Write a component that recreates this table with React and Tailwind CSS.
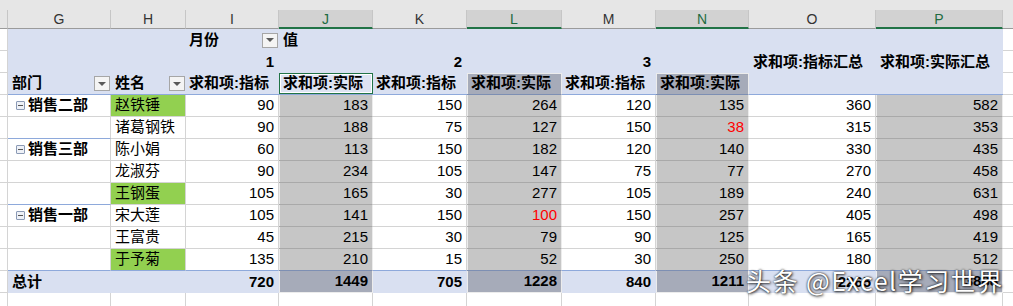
import React from 'react'

const FONT = { fontFamily: '"Liberation Sans", "Noto Sans CJK SC", sans-serif' }

const letters = ['G', 'H', 'I', 'J', 'K', 'L', 'M', 'N', 'O', 'P']
const picked = ['J', 'L', 'N', 'P']

const rows = [
  { dept: '销售二部', name: '赵铁锤', green: true, v: [90, 183, 150, 264, 120, 135, 360, 582] },
  { name: '诸葛钢铁', v: [90, 188, 75, 127, 150, 38, 315, 353], red: 5 },
  { dept: '销售三部', name: '陈小娟', v: [60, 113, 150, 182, 120, 140, 330, 435] },
  { name: '龙淑芬', v: [90, 234, 105, 147, 75, 77, 270, 458] },
  { name: '王钢蛋', green: true, v: [105, 165, 30, 277, 105, 189, 240, 631] },
  { dept: '销售一部', name: '宋大莲', v: [105, 141, 150, 100, 150, 257, 405, 498], red: 3 },
  { name: '王富贵', v: [45, 215, 30, 79, 90, 125, 165, 419] },
  { name: '于予菊', green: true, v: [135, 210, 15, 52, 30, 250, 180, 512] },
]
const totals = [720, 1449, 705, 1228, 840, 1211, 2265, 3888]

function Drop() {
  return (
    <span className="flex h-[15px] w-[16px] shrink-0 items-center justify-center border border-[#a6a6a6] bg-[#f4f4f4]">
      <span className="h-0 w-0 border-x-[4px] border-t-[4px] border-x-transparent border-t-[#595959]" />
    </span>
  )
}

function Minus() {
  return (
    <span className="mr-[3px] flex h-[9px] w-[9px] shrink-0 items-center justify-center rounded-[1px] border border-[#8b9ab5] bg-[#eef1f7]">
      <span className="h-px w-[5px] bg-[#555]" />
    </span>
  )
}

// plain white gridline cell (row header strip, blank cells)
const plain = 'border-r border-b border-r-[#d4d4d4] border-b-[#d4d4d4] bg-white'

function App() {
  return (
    <div className="relative h-[306px] w-[1013px] overflow-hidden bg-white text-[15px] text-black" style={FONT}>
      <div className="h-[10px] bg-[#e6e6e6]" />

      <div className="grid grid-cols-[8px_103px_75px_93px_94px_94px_95px_94px_93px_127px_127px_10px] grid-rows-[19px_repeat(12,22px)_13px]">
        {/* column letters */}
        <div className="border-r border-b border-r-[#c6c6c6] border-b-[#9b9b9b] bg-[#e6e6e6]" />
        {letters.map(l =>
          picked.includes(l) ? (
            <div key={l} className="flex items-center justify-center border-r border-b-2 border-r-[#c6c6c6] border-b-[#217346] bg-[#d2d2d2] pt-[1px] text-[14px] text-[#1e6b41]">
              {l}
            </div>
          ) : (
            <div key={l} className="flex items-center justify-center border-r border-b border-r-[#c6c6c6] border-b-[#9b9b9b] bg-[#e6e6e6] text-[14px] text-[#333]">
              {l}
            </div>
          )
        )}
        <div className="border-b border-b-[#9b9b9b] bg-[#e6e6e6]" />

        {/* pivot row 1 */}
        <div className={plain} />
        <div className="bg-[#d9e0f1]" />
        <div className="bg-[#d9e0f1]" />
        <div className="flex items-center justify-between bg-[#d9e0f1] pl-[3px] pr-[1px] font-bold">
          <span>月份</span>
          <Drop />
        </div>
        <div className="flex items-center bg-[#d9e0f1] pl-[4px] font-bold">值</div>
        {[0, 1, 2, 3, 4, 5].map(i => <div key={i} className="bg-[#d9e0f1]" />)}
        <div className="border-b border-b-[#d4d4d4]" />

        {/* pivot row 2 */}
        <div className={plain} />
        <div className="bg-[#d9e0f1]" />
        <div className="bg-[#d9e0f1]" />
        <div className="flex items-center justify-end bg-[#d9e0f1] pr-[5px] font-bold">1</div>
        <div className="bg-[#d9e0f1]" />
        <div className="flex items-center justify-end bg-[#d9e0f1] pr-[5px] font-bold">2</div>
        <div className="bg-[#d9e0f1]" />
        <div className="flex items-center justify-end bg-[#d9e0f1] pr-[5px] font-bold">3</div>
        <div className="bg-[#d9e0f1]" />
        <div className="flex items-center bg-[#d9e0f1] pl-[4px] font-bold">求和项:指标汇总</div>
        <div className="flex items-center bg-[#d9e0f1] pl-[4px] font-bold">求和项:实际汇总</div>
        <div className="border-b border-b-[#d4d4d4]" />

        {/* pivot row 3 */}
        <div className={plain} />
        <div className="flex items-center justify-between border-b border-b-[#8ea9db] bg-[#d9e0f1] pl-[4px] pr-[1px] font-bold">
          <span>部门</span>
          <Drop />
        </div>
        <div className="flex items-center justify-between border-b border-b-[#8ea9db] bg-[#d9e0f1] pl-[4px] pr-[1px] font-bold">
          <span>姓名</span>
          <Drop />
        </div>
        <div className="flex items-center border-b border-b-[#8ea9db] bg-[#d9e0f1] pl-[3px] font-bold">求和项:指标</div>
        <div className="flex items-center border-b border-b-[#8ea9db] bg-[#dde3f2] pl-[4px] font-bold shadow-[inset_0_0_0_1px_#217346,inset_0_0_0_2px_#ffffff]">求和项:实际</div>
        <div className="flex items-center border-b border-b-[#8ea9db] bg-[#d9e0f1] pl-[3px] font-bold">求和项:指标</div>
        <div className="flex items-center border-r border-b border-r-[#ececec] border-b-[#7d8fb3] bg-[#a6abb9] pl-[4px] font-bold shadow-[inset_1px_1px_0_#ececec]">求和项:实际</div>
        <div className="flex items-center border-b border-b-[#8ea9db] bg-[#d9e0f1] pl-[3px] font-bold">求和项:指标</div>
        <div className="flex items-center border-r border-b border-r-[#ececec] border-b-[#7d8fb3] bg-[#a6abb9] pl-[4px] font-bold shadow-[inset_1px_1px_0_#ececec]">求和项:实际</div>
        <div className="border-b border-b-[#8ea9db] bg-[#d9e0f1]" />
        <div className="border-b border-b-[#8ea9db] bg-[#d9e0f1]" />
        <div className="border-b border-b-[#d4d4d4]" />

        {/* data */}
        {rows.map((r, ri) => {
          const last = ri === 7
          const deptEnd = ri === 1 || ri === 4 || ri === 7
          return (
            <React.Fragment key={ri}>
              <div className={plain} />
              <div
                className={
                  deptEnd
                    ? 'flex items-center border-r border-b border-r-[#d4d4d4] border-b-[#8ea9db] pl-[8px] font-bold'
                    : 'flex items-center border-r border-b border-r-[#d4d4d4] border-b-[#d4d4d4] pl-[8px] font-bold'
                }
              >
                {r.dept && (
                  <>
                    <Minus />
                    <span>{r.dept}</span>
                  </>
                )}
              </div>
              <div
                className={
                  (last
                    ? 'flex items-center border-r border-b border-r-[#d4d4d4] border-b-[#8ea9db] pl-[4px] '
                    : 'flex items-center border-r border-b border-r-[#d4d4d4] border-b-[#d4d4d4] pl-[4px] ') +
                  (r.green ? 'bg-[#92d050]' : 'bg-white')
                }
              >
                {r.name}
              </div>
              {r.v.map((n, i) => {
                const sel = i % 2 === 1
                let cls
                if (sel) {
                  cls = last
                    ? 'border-r border-b border-r-[#ececec] border-b-[#7d8fb3] bg-[#c6c6c6] shadow-[inset_1px_0_0_#ececec]'
                    : 'border-r border-b border-r-[#ececec] border-b-[#a9a9a9] bg-[#c6c6c6] shadow-[inset_1px_0_0_#ececec]'
                } else {
                  cls = last
                    ? 'border-r border-b border-r-[#d4d4d4] border-b-[#8ea9db] bg-white'
                    : 'border-r border-b border-r-[#d4d4d4] border-b-[#d4d4d4] bg-white'
                }
                return (
                  <div key={i} className={'flex items-center justify-end pr-[4px] ' + cls}>
                    <span className={r.red === i ? 'text-[#ff0000]' : ''}>{n}</span>
                  </div>
                )
              })}
              <div className="border-b border-b-[#d4d4d4]" />
            </React.Fragment>
          )
        })}

        {/* total */}
        <div className={plain} />
        <div className="flex items-center bg-[#d9e0f1] pl-[4px] font-bold">总计</div>
        <div className="bg-[#d9e0f1]" />
        {totals.map((n, i) =>
          i % 2 === 1 ? (
            <div key={i} className="flex items-center justify-end border-r border-b border-r-[#ececec] border-b-[#ececec] bg-[#a6abb9] pr-[4px] font-bold shadow-[inset_1px_0_0_#ececec]">
              {n}
            </div>
          ) : (
            <div key={i} className="flex items-center justify-end bg-[#d9e0f1] pr-[5px] font-bold">
              {n}
            </div>
          )
        )}
        <div className="border-b border-b-[#d4d4d4]" />

        {/* blank row */}
        <div className="border-r border-r-[#d4d4d4]" />
        {letters.map(l => (
          <div key={l} className="border-r border-r-[#d4d4d4]" />
        ))}
        <div />
      </div>

      {/* watermark */}
      <div
        className="absolute left-[746px] top-[262px] whitespace-nowrap text-[25px] tracking-[1.5px] text-white [text-shadow:0_0_2px_rgba(0,0,0,0.9),1px_1px_3px_rgba(0,0,0,0.8)]"
        style={{ fontFamily: '"Noto Sans CJK SC", sans-serif' }}
      >
        头条 @Excel学习世界
      </div>
    </div>
  )
}

export default App
